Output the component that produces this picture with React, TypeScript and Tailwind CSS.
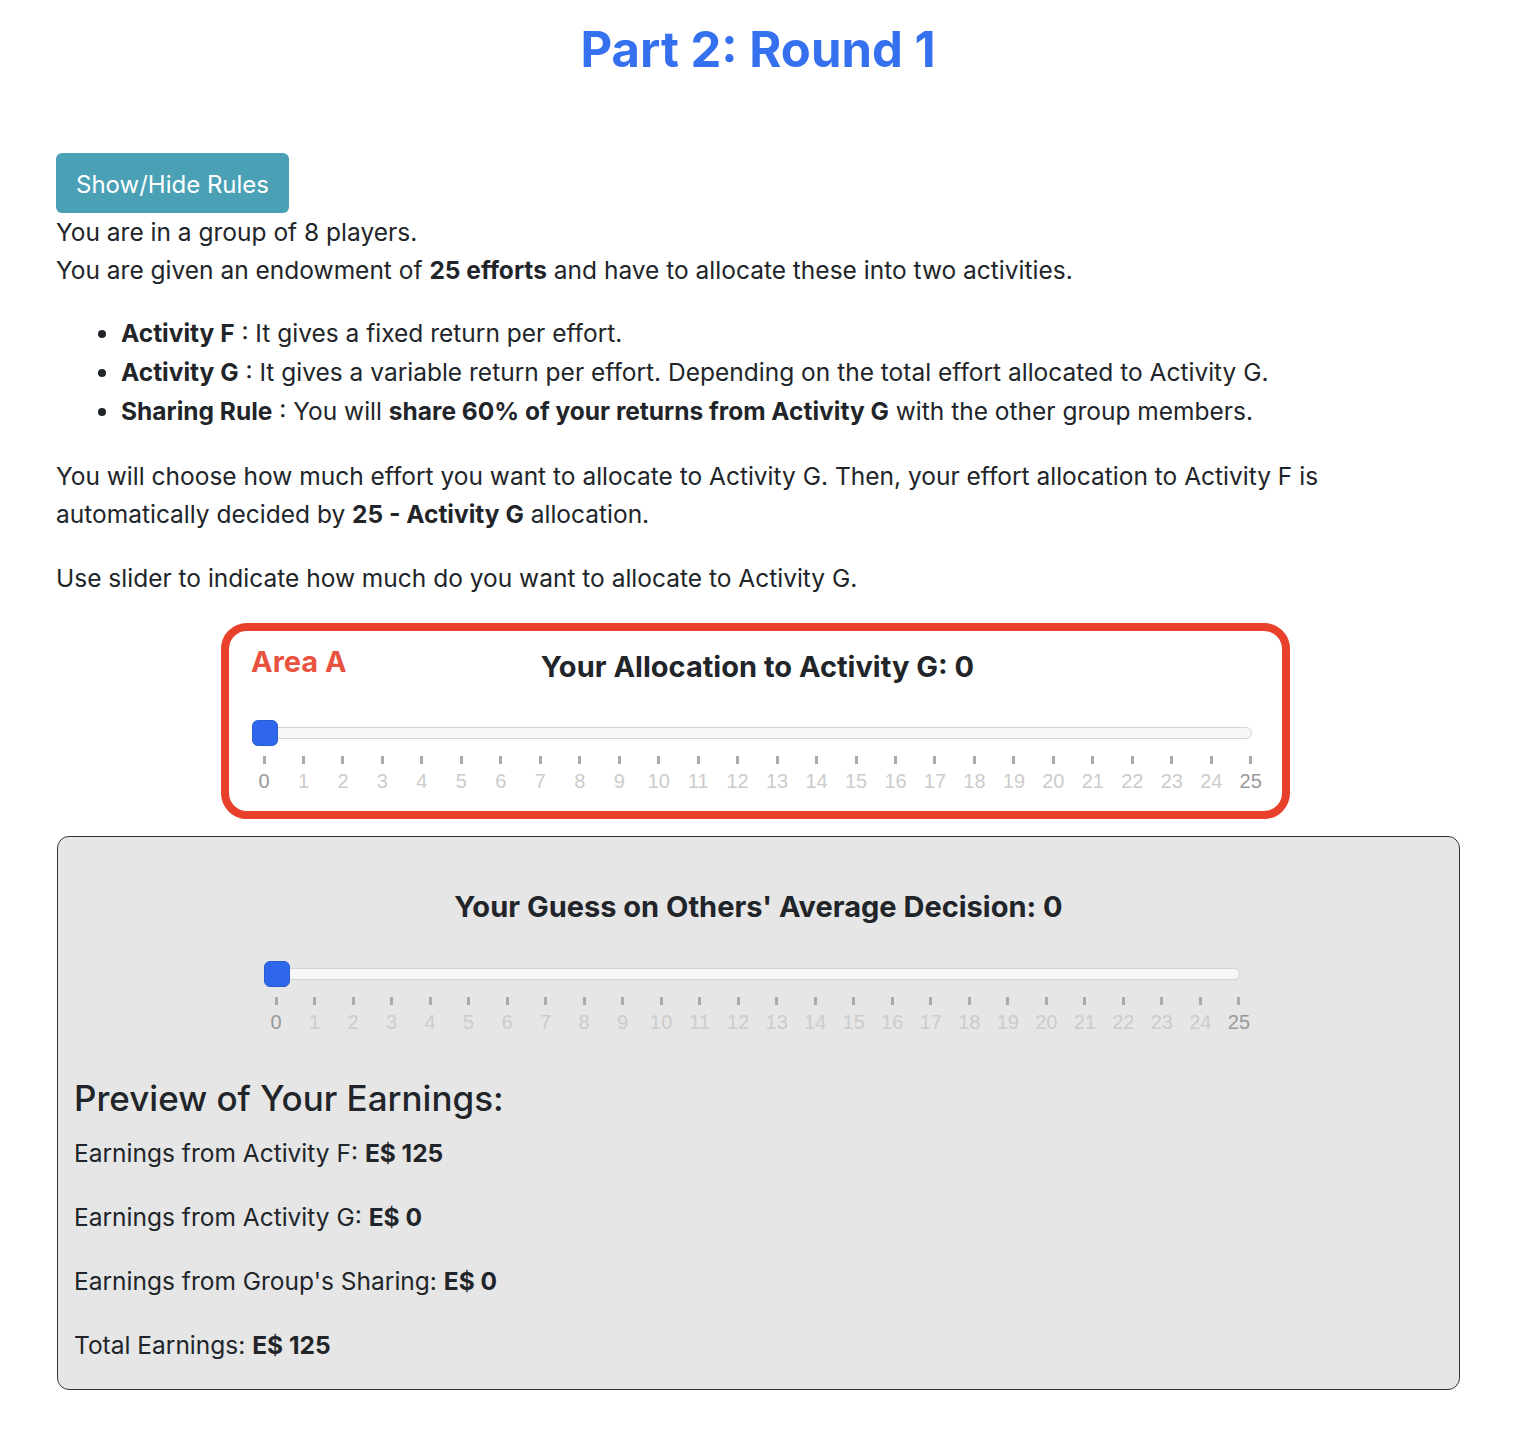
import React from 'react';

const TICKS = Array.from({ length: 26 }, (_, i) => i);

const Slider: React.FC<{ width: number; value: number }> = ({ width, value }) => {
  return (
    <div style={{ width }} className="relative">
      <div className="relative h-[26px] flex items-center">
        <div className="w-full h-[12px] rounded-full bg-[#f7f7f7] border border-[#d4d4d4]" />
        <div className="absolute left-0 top-0 w-[26px] h-[26px] rounded-[6px] bg-[#2f67ec] border border-[#2a5cd4]" />
      </div>
      <div className="flex justify-between pl-[12px] pr-[1px] mt-[10px]">
        {TICKS.map((t) => (
          <div key={t} className="w-0 flex flex-col items-center">
            <div className="w-[3px] h-[8px] bg-[#ababab] shrink-0" />
            <span
              className={`mt-[4px] text-[20px] leading-[26px] whitespace-nowrap ${
                t === 0 || t === 25 || t === value ? 'text-[#999999]' : 'text-[#cccccc]'
              }`}
              style={{ fontFamily: '"Liberation Sans", Arial, sans-serif' }}
            >
              {t}
            </span>
          </div>
        ))}
      </div>
    </div>
  );
};

const App: React.FC = () => {
  return (
    <div
      className="min-h-screen bg-white text-[#212529] pb-[40px]"
      style={{ fontFamily: 'Inter, "Noto Sans", sans-serif' }}
    >
      <div className="mx-[56px] w-[1404px]">
        <h1 className="pt-[22px] text-center text-[49px] leading-[56px] font-bold text-[#3570ef]">
          Part 2: Round 1
        </h1>

        <button className="mt-[75px] h-[60px] px-[20px] pt-[3px] rounded-[6px] bg-[#4aa1b6] text-white text-[24px] leading-none">
          Show/Hide Rules
        </button>

        <div className="text-[24.5px] leading-[38px]">
          <p>You are in a group of 8 players.</p>
          <p>
            You are given an endowment of <b>25 efforts</b> and have to allocate these into two activities.
          </p>

          <ul className="mt-[25px] list-disc pl-[65px] leading-[39px]">
            <li>
              <b>Activity F</b> : It gives a fixed return per effort.
            </li>
            <li>
              <b>Activity G</b> : It gives a variable return per effort. Depending on the total effort allocated to
              Activity G.
            </li>
            <li>
              <b>Sharing Rule</b> : You will <b>share 60% of your returns from Activity G</b> with the other group
              members.
            </li>
          </ul>

          <p className="mt-[26px]">
            You will choose how much effort you want to allocate to Activity G. Then, your effort allocation to
            Activity F is
            <br />
            automatically decided by <b>25 - Activity G</b> allocation.
          </p>

          <p className="mt-[26px]">Use slider to indicate how much do you want to allocate to Activity G.</p>
        </div>

        <div className="relative mt-[26px] ml-[165px] w-[1069px] border-[8px] border-[#e8402a] rounded-[26px] pt-[18px] pb-[17px] pl-[23px]">
          <span className="absolute left-[22px] top-[14px] text-[29px] leading-[34px] font-bold text-[#e8533f]">
            Area A
          </span>
          <h3 className="text-center text-[29px] leading-[36px] font-bold pr-[19px]">
            Your Allocation to Activity G: 0
          </h3>
          <div className="mt-[35px]">
            <Slider width={1000} value={0} />
          </div>
        </div>

        <div className="mt-[17px] ml-[1px] border border-[#333333] rounded-[12px] bg-[#e6e6e6] px-[16px] pt-[52px] pb-[29px]">
          <h3 className="text-center text-[29px] leading-[36px] font-bold">
            Your Guess on Others' Average Decision: 0
          </h3>
          <div className="mt-[36px] ml-[190px]">
            <Slider width={976} value={0} />
          </div>

          <h2 className="mt-[41px] text-[35px] leading-[44px] font-medium">Preview of Your Earnings:</h2>
          <div className="text-[24.5px] leading-[30px]">
            <p className="mt-[18px]">
              Earnings from Activity F: <b>E$ 125</b>
            </p>
            <p className="mt-[34px]">
              Earnings from Activity G: <b>E$ 0</b>
            </p>
            <p className="mt-[34px]">
              Earnings from Group's Sharing: <b>E$ 0</b>
            </p>
            <p className="mt-[34px]">
              Total Earnings: <b>E$ 125</b>
            </p>
          </div>
        </div>
      </div>
    </div>
  );
};

export default App;
